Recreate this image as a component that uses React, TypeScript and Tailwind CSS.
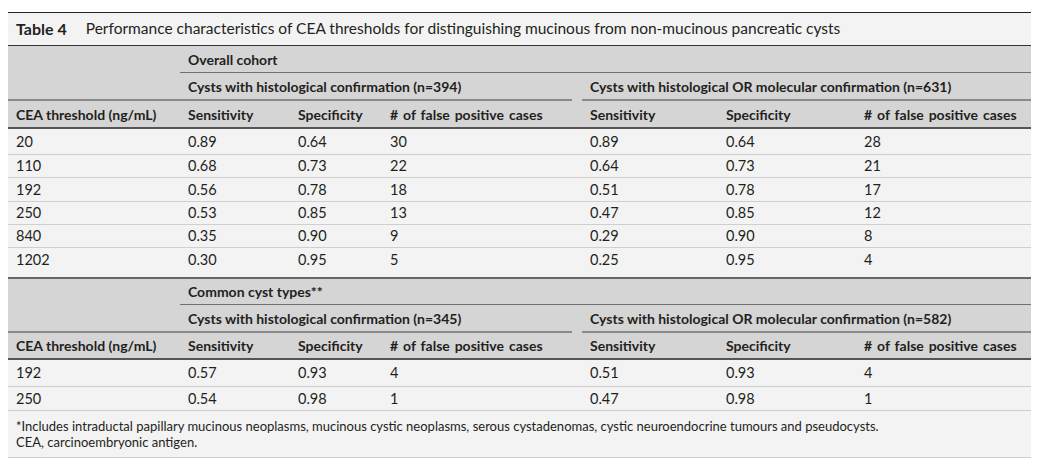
import React from "react";

const cols = "grid grid-cols-[172px_110px_92px_200px_136px_138px_175px]";

type Row = [string, string, string, string, string, string, string];

const sec1: Row[] = [
  ["20", "0.89", "0.64", "30", "0.89", "0.64", "28"],
  ["110", "0.68", "0.73", "22", "0.64", "0.73", "21"],
  ["192", "0.56", "0.78", "18", "0.51", "0.78", "17"],
  ["250", "0.53", "0.85", "13", "0.47", "0.85", "12"],
  ["840", "0.35", "0.90", "9", "0.29", "0.90", "8"],
  ["1202", "0.30", "0.95", "5", "0.25", "0.95", "4"],
];
const sec1H = ["h-[26px]", "h-[23px]", "h-[24px]", "h-[23px]", "h-[23px]", "h-[31px] pb-[5px]"];

const sec2: Row[] = [
  ["192", "0.57", "0.93", "4", "0.51", "0.93", "4"],
  ["250", "0.54", "0.98", "1", "0.47", "0.98", "1"],
];
const sec2H = ["h-[27px]", "h-[24px]"];

function Header({ label, n1, n2, hA, hC }: { label: string; n1: string; n2: string; hA: string; hC: string }) {
  const heads = ["CEA threshold (ng/mL)", "Sensitivity", "Specificity", "# of false positive cases", "Sensitivity", "Specificity", "# of false positive cases"];
  return (
    <div className="bg-[#d5d5d5] font-bold text-[14px]">
      <div className={`${cols} ${hA}`}>
        <div />
        <div className="col-span-6 border-b border-[#707070] pl-2 flex items-center">{label}</div>
      </div>
      <div className={`${cols} h-[28px]`}>
        <div className="border-b-2 border-[#8a8a8a]" />
        <div className="col-span-3 mr-[10px] border-b-2 border-[#8a8a8a] pl-2 flex items-center">
          Cysts with histological confirmation (n={n1})
        </div>
        <div className="col-span-3 border-b-2 border-[#8a8a8a] pl-2 flex items-center">
          Cysts with histological OR molecular confirmation (n={n2})
        </div>
      </div>
      <div className={`${cols} ${hC} border-b-2 border-[#555]`}>
        {heads.map((h, i) => (
          <div
            key={i}
            className={
              i === 3 || i === 6
                ? "pl-2 flex items-center whitespace-nowrap [word-spacing:1.5px]"
                : "pl-2 flex items-center whitespace-nowrap"
            }
          >
            {h}
          </div>
        ))}
      </div>
    </div>
  );
}

function DataRows({ rows, heights, lastDark }: { rows: Row[]; heights: string[]; lastDark: boolean }) {
  return (
    <div className="text-[14.5px]">
      {rows.map((r, i) => {
        const last = i === rows.length - 1;
        const border = last && lastDark ? "border-b-2 border-[#666]" : "border-b border-[#cfcfcf]";
        return (
          <div key={i} className={`${cols} ${heights[i]} ${border}`}>
            {r.map((c, j) => (
              <div key={j} className="pl-2 flex items-center">
                {c}
              </div>
            ))}
          </div>
        );
      })}
    </div>
  );
}

export default function App() {
  return (
    <div className="w-[1041px] h-[469px] bg-white pt-[12px] pl-[8px] text-[#231f20] font-['Lato',sans-serif]">
      <div className="w-[1023px] bg-[#f3f3f3] border-t border-[#222]">
        <div className="h-[33px] border-b border-[#333] flex items-center pl-2">
          <span className="font-bold text-[16px]">Table 4</span>
          <span className="ml-[19px] text-[15.5px]">
            Performance characteristics of CEA thresholds for distinguishing mucinous from non-mucinous pancreatic cysts
          </span>
        </div>
        <Header label="Overall cohort" n1="394" n2="631" hA="h-[27px]" hC="h-[28px]" />
        <DataRows rows={sec1} heights={sec1H} lastDark={true} />
        <Header label="Common cyst types**" n1="345" n2="582" hA="h-[26px]" hC="h-[27px]" />
        <DataRows rows={sec2} heights={sec2H} lastDark={false} />
        <div className="h-[47px] border-b border-[#cfcfcf] pl-2 pt-[7px] text-[13px] leading-[16px] bg-[#f3f3f3]">
          <div>
            *Includes intraductal papillary mucinous neoplasms, mucinous cystic neoplasms, serous cystadenomas, cystic neuroendocrine tumours and pseudocysts.
          </div>
          <div>CEA, carcinoembryonic antigen.</div>
        </div>
      </div>
    </div>
  );
}
